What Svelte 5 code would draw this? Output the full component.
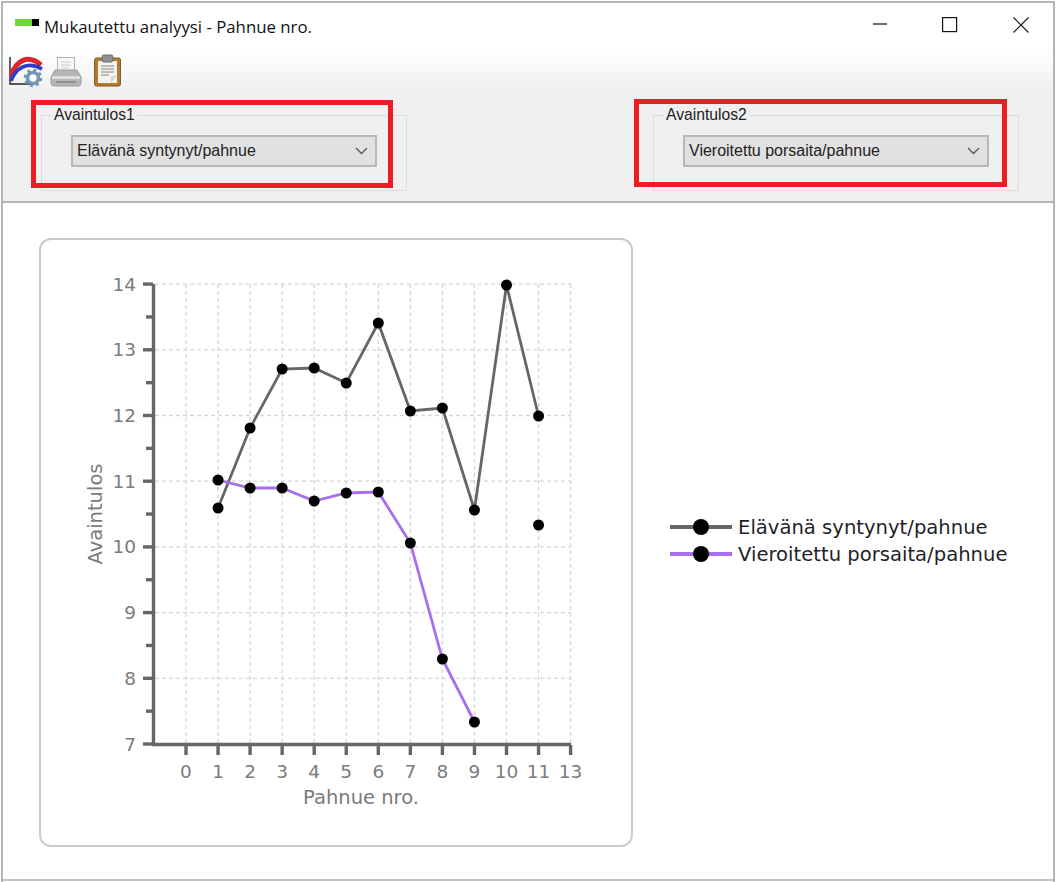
<script>
    // the category axis has no slot for 12: 13 sits right after 11
    const xOf = (i) => 186 + i * 32.05
    const yOf = (v) => 744 - (v - 7) * 65.7

    const xTicks = [0, 1, 2, 3, 4, 5, 6, 7, 8, 9, 10, 11, 13]
    const yTicks = [7, 8, 9, 10, 11, 12, 13, 14]
    const yMinor = [7.5, 8.5, 9.5, 10.5, 11.5, 12.5, 13.5]

    const series1 = [[1, 508], [2, 428], [3, 369], [4, 368], [5, 383], [6, 323], [7, 411], [8, 408], [9, 510], [10, 285], [11, 416]]
    const series2 = [[1, 480], [2, 488], [3, 488], [4, 501], [5, 493], [6, 492], [7, 543], [8, 659], [9, 722]]
    const loose = [[11, 525]]

    const toPoints = (list) => list.map(([n, y]) => xOf(n) + "," + y).join(" ")
</script>

<div class="window">
    <header class="titlebar">
        <span class="appicon"><i></i><b></b></span>
        <span class="title">Mukautettu analyysi - Pahnue nro.</span>
        <div class="controls">
            <svg width="16" height="16" viewBox="0 0 16 16"><path d="M2 7h14" stroke="#111" stroke-width="1.2" /></svg>
            <svg width="16" height="16" viewBox="0 0 16 16"><rect x="0.6" y="0.6" width="14" height="14" fill="none" stroke="#111" stroke-width="1.2" /></svg>
            <svg width="16" height="16" viewBox="0 0 16 16"><path d="M0.5 0.5l15 15M15.5 0.5l-15 15" stroke="#111" stroke-width="1.1" /></svg>
        </div>
    </header>

    <section class="panel">
        <div class="toolbar">
            <svg class="tool" width="36" height="34" viewBox="0 0 36 34">
                <path d="M2 3v27h24" fill="none" stroke="#222" stroke-width="1.4" />
                <path d="M3 22C8 6 20 0 33 11" fill="none" stroke="#e0242a" stroke-width="5" />
                <path d="M3 27C8 13 20 7 34 15" fill="none" stroke="#2a3cc8" stroke-width="3.6" />
                <circle cx="25" cy="24" r="5.5" fill="none" stroke="#7296b4" stroke-width="3.6" />
                <circle cx="25" cy="24" r="8" fill="none" stroke="#7296b4" stroke-width="2.6" stroke-dasharray="3 3.3" />
                <circle cx="25" cy="24" r="3" fill="#fff" />
            </svg>
            <svg class="tool printer" width="32" height="32" viewBox="0 0 32 32">
                <rect x="7.5" y="1.5" width="17" height="15" fill="#f6f6f6" stroke="#b2b2b2" />
                <path d="M11 6h10M11 9h10M11 12h7" stroke="#cdcdcd" />
                <path d="M5 14h22l4 7v6a3 3 0 0 1-3 3H4a3 3 0 0 1-3-3v-6z" fill="#b3b5b7" stroke="#9c9ea0" />
                <rect x="2" y="20" width="28" height="3" fill="#dcdddd" />
                <rect x="6" y="25" width="20" height="2" fill="#8f9193" />
            </svg>
            <svg class="tool clip" width="30" height="33" viewBox="0 0 30 33">
                <rect x="1.5" y="4" width="26" height="28" rx="2" fill="#b57a2c" stroke="#7a5a30" />
                <rect x="5" y="7" width="19" height="22" fill="#f3f3f1" />
                <rect x="9" y="1" width="11" height="7" rx="2" fill="#8d8f90" stroke="#6b6d6e" />
                <path d="M8 12h13M8 15h13M8 18h13M8 21h8" stroke="#a9a9a9" stroke-width="1.3" />
                <path d="M24 22l-6 7v-7z" fill="#d8d8d4" />
            </svg>
        </div>

        <div class="groups">
            <fieldset>
                <legend>Avaintulos1</legend>
                <div class="combo">
                    <span>Elävänä syntynyt/pahnue</span>
                    <svg width="13" height="8" viewBox="0 0 13 8"><path d="M1 1l5.5 5.5L12 1" fill="none" stroke="#555" stroke-width="1.3" /></svg>
                </div>
            </fieldset>
            <fieldset>
                <legend>Avaintulos2</legend>
                <div class="combo">
                    <span>Vieroitettu porsaita/pahnue</span>
                    <svg width="13" height="8" viewBox="0 0 13 8"><path d="M1 1l5.5 5.5L12 1" fill="none" stroke="#555" stroke-width="1.3" /></svg>
                </div>
            </fieldset>
        </div>

        <!-- annotation boxes drawn on top of the screenshot -->
        <div class="mark mark1"></div>
        <div class="mark mark2"></div>
    </section>

    <main class="content">
        <div class="card">
            <svg width="594" height="609" viewBox="39 238 594 609">
                {#each yTicks as v}
                    {#if v > 7}
                        <line class="grid" x1="155" x2="571" y1={yOf(v)} y2={yOf(v)} />
                    {/if}
                {/each}
                {#each xTicks as n, i}
                    <line class="grid" x1={xOf(i)} x2={xOf(i)} y1="284" y2="743" />
                {/each}

                <path class="axis" d="M153.5 284V744.5H571" />
                {#each yTicks as v}
                    <line class="axis" x1="143" x2="153" y1={yOf(v)} y2={yOf(v)} />
                    <text class="tick" x="136" y={yOf(v) + 6.5} text-anchor="end">{v}</text>
                {/each}
                {#each yMinor as v}
                    <line class="axis" x1="146" x2="153" y1={yOf(v)} y2={yOf(v)} />
                {/each}
                {#each xTicks as n, i}
                    <line class="axis" x1={xOf(i)} x2={xOf(i)} y1="745" y2="755" />
                    <text class="tick" x={xOf(i)} y="778" text-anchor="middle">{n}</text>
                {/each}

                <text class="label" x="361" y="804" text-anchor="middle">Pahnue nro.</text>
                <text class="label" x="102" y="514" text-anchor="middle" transform="rotate(-90 102 514)">Avaintulos</text>

                <polyline class="line" points={toPoints(series1)} stroke="#666666" />
                <polyline class="line" points={toPoints(series2)} stroke="#a96ef0" />
                {#each [...series1, ...series2, ...loose] as [n, y]}
                    <circle cx={xOf(n)} cy={y} r="5.5" fill="#000" />
                {/each}
            </svg>
        </div>

        <div class="legend">
            <div class="entry">
                <svg width="62" height="18" viewBox="0 0 62 18"><path d="M0 9h62" stroke="#666" stroke-width="4" /><circle cx="31" cy="9" r="8" fill="#000" /></svg>
                <span>Elävänä syntynyt/pahnue</span>
            </div>
            <div class="entry">
                <svg width="62" height="18" viewBox="0 0 62 18"><path d="M0 9h62" stroke="#a96ef0" stroke-width="4" /><circle cx="31" cy="9" r="8" fill="#000" /></svg>
                <span>Vieroitettu porsaita/pahnue</span>
            </div>
        </div>
    </main>
</div>

<style>
    :global(body) {
        background: #fff;
    }

    .window {
        box-sizing: border-box;
        width: 1054px;
        height: 881px;
        margin: 1px 0 0 1px;
        border: 2px solid #b4b4b4;
        border-bottom: none;
        display: flex;
        flex-direction: column;
        font-family: "Liberation Sans", sans-serif;
        color: #1c1c1c;
        background: #fff;
    }

    .titlebar {
        height: 47px;
        flex: none;
        display: flex;
        align-items: center;
        padding-left: 12px;
    }

    .appicon {
        display: flex;
        width: 24px;
        height: 7px;
        margin-bottom: 8px;
    }
    .appicon i {
        flex: 1;
        background: #6fd63a;
    }
    .appicon b {
        width: 7px;
        background: #000;
    }

    .title {
        margin-left: 5px;
        font-family: "Open Sans", sans-serif;
        font-size: 16.8px;
        color: #111;
    }

    .controls {
        margin-left: auto;
        margin-right: 24px;
        margin-bottom: 3px;
        display: flex;
        gap: 55px;
        align-items: center;
    }

    .panel {
        position: relative;
        height: 153px;
        flex: none;
        box-sizing: border-box;
        border-bottom: 2px solid #b8b8b8;
        background: linear-gradient(#fff 0, #f0f0f0 40px);
    }

    .toolbar {
        height: 57px;
        display: flex;
        align-items: flex-start;
        padding: 4px 0 0 5px;
        box-sizing: border-box;
    }
    .tool {
        margin-right: 6px;
    }
    .printer {
        margin-top: 2px;
    }
    .clip {
        margin-left: 5px;
    }

    .groups {
        display: flex;
        gap: 246px;
        padding-left: 38px;
    }

    fieldset {
        box-sizing: border-box;
        width: 366px;
        height: 84px;
        margin: 0;
        padding: 12px 28px 0 29px;
        border: 1px solid #dcdcdc;
    }

    legend {
        padding: 0 2px;
        margin-left: -19px;
        font-size: 15.7px;
        line-height: 16px;
        color: #222;
    }

    .combo {
        box-sizing: border-box;
        height: 32px;
        width: 306px;
        display: flex;
        align-items: center;
        justify-content: space-between;
        padding: 0 7px 0 4px;
        background: #e1e1e1;
        border: 2px solid #b8b8b8;
        font-size: 16px;
        color: #222;
    }

    .mark {
        position: absolute;
        box-sizing: border-box;
        height: 88px;
        border: 5px solid #ed1c24;
    }
    .mark1 {
        top: 50px;
        left: 28px;
        width: 362px;
    }
    .mark2 {
        top: 49px;
        left: 631px;
        width: 373px;
    }

    .content {
        flex: 1;
        display: flex;
        align-items: flex-start;
        padding: 35px 0 0 36px;
        border-bottom: 2px solid #c4c4c4;
        margin-bottom: 1px;
        background: #fff;
    }

    .card {
        flex: none;
        box-sizing: border-box;
        width: 594px;
        height: 609px;
        border: 2px solid #cbcbcb;
        border-radius: 12px;
        overflow: hidden;
    }
    .card svg {
        display: block;
        margin: -2px;
    }

    .grid {
        stroke: #d6d6d6;
        stroke-width: 1.3;
        stroke-dasharray: 4 3;
    }
    .axis {
        stroke: #666;
        stroke-width: 3.4;
        fill: none;
    }
    .tick {
        font-family: "DejaVu Sans", sans-serif;
        font-size: 18.5px;
        fill: #7b7b7b;
    }
    .label {
        font-family: "DejaVu Sans", sans-serif;
        font-size: 19.5px;
        fill: #7b7b7b;
    }
    .line {
        fill: none;
        stroke-width: 2.8;
    }

    .legend {
        margin: 280px 0 0 37px;
        display: flex;
        flex-direction: column;
        gap: 9px;
    }
    .entry {
        display: flex;
        align-items: center;
        height: 18px;
        gap: 6px;
        font-family: "DejaVu Sans", sans-serif;
        font-size: 19.6px;
        color: #1f1f2a;
        white-space: nowrap;
    }
</style>
